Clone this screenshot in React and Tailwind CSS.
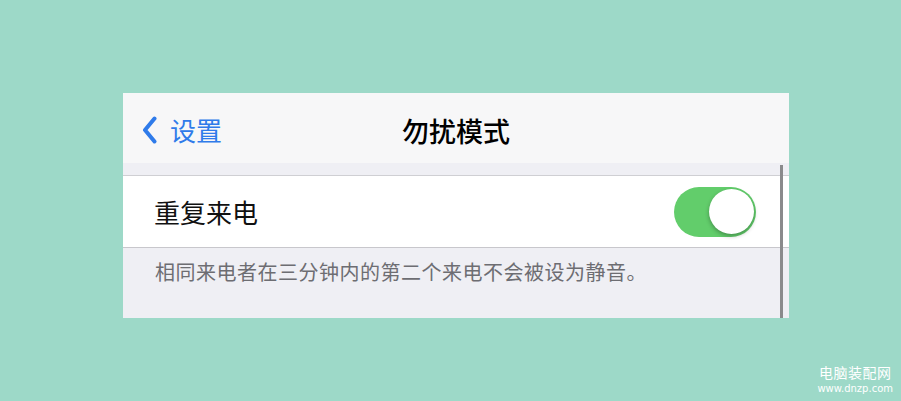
import React from 'react';

const CJK = { fontFamily: '"Noto Sans CJK SC", "Noto Sans", sans-serif' };

const Toggle = () => (
  <div className="w-[82px] h-[50px] rounded-full bg-[#62cd6b] flex items-center justify-end pr-[2px]">
    <div className="w-[45px] h-[45px] rounded-full bg-white shadow-[0_2px_4px_rgba(0,0,0,0.3)]" />
  </div>
);

export default function App() {
  return (
    <div className="relative w-[901px] h-[401px] bg-[#9dd9c8] pt-[93px] pl-[123px] overflow-hidden" style={CJK}>
      <div className="relative w-[666px] h-[225px] flex flex-col bg-[#efeff4]">
        {/* nav bar */}
        <div className="relative h-[70px] bg-[#f7f7f8] flex items-center pt-[4px]">
          <div className="flex items-center pl-[19px] text-[#2f7bea]">
            <svg width="15" height="28" viewBox="0 0 15 28" className="mr-[13px]">
              <path d="M12.5 2.5 L3 14 L12.5 25.5" fill="none" stroke="#2f7bea" strokeWidth="4" strokeLinecap="round" strokeLinejoin="round" />
            </svg>
            <span className="text-[26px] leading-none">设置</span>
          </div>
          <div className="absolute inset-0 pt-[4px] flex items-center justify-center pointer-events-none">
            <span className="text-[27px] font-medium leading-none text-black">勿扰模式</span>
          </div>
        </div>
        <div className="h-[13px] bg-[#efeff4] border-b border-[#cfcfd3]" />
        {/* row */}
        <div className="h-[72px] bg-white border-b border-[#c8c7cc] flex items-center justify-between pl-[31px] pr-[33px]">
          <span className="text-[26px] leading-none text-[#111]">重复来电</span>
          <Toggle />
        </div>
        {/* footer */}
        <div className="flex-1 bg-[#efeff4] pl-[32px] pt-[13px]">
          <span className="text-[20px] leading-none tracking-[0.5px] text-[#6d6d72]">相同来电者在三分钟内的第二个来电不会被设为静音。</span>
        </div>
        {/* scrollbar */}
        <div className="absolute right-[6px] top-[72px] bottom-0 w-[3px] bg-[#8a8a8c]" />
      </div>
      {/* watermark */}
      <div className="absolute right-[8px] bottom-[7px] flex flex-col items-center text-white">
        <span className="text-[14px] leading-none tracking-[0.5px]">电脑装配网</span>
        <span className="text-[10px] leading-none mt-[5px]" style={{ fontFamily: '"DejaVu Sans", sans-serif' }}>www.dnzp.com</span>
      </div>
    </div>
  );
}
